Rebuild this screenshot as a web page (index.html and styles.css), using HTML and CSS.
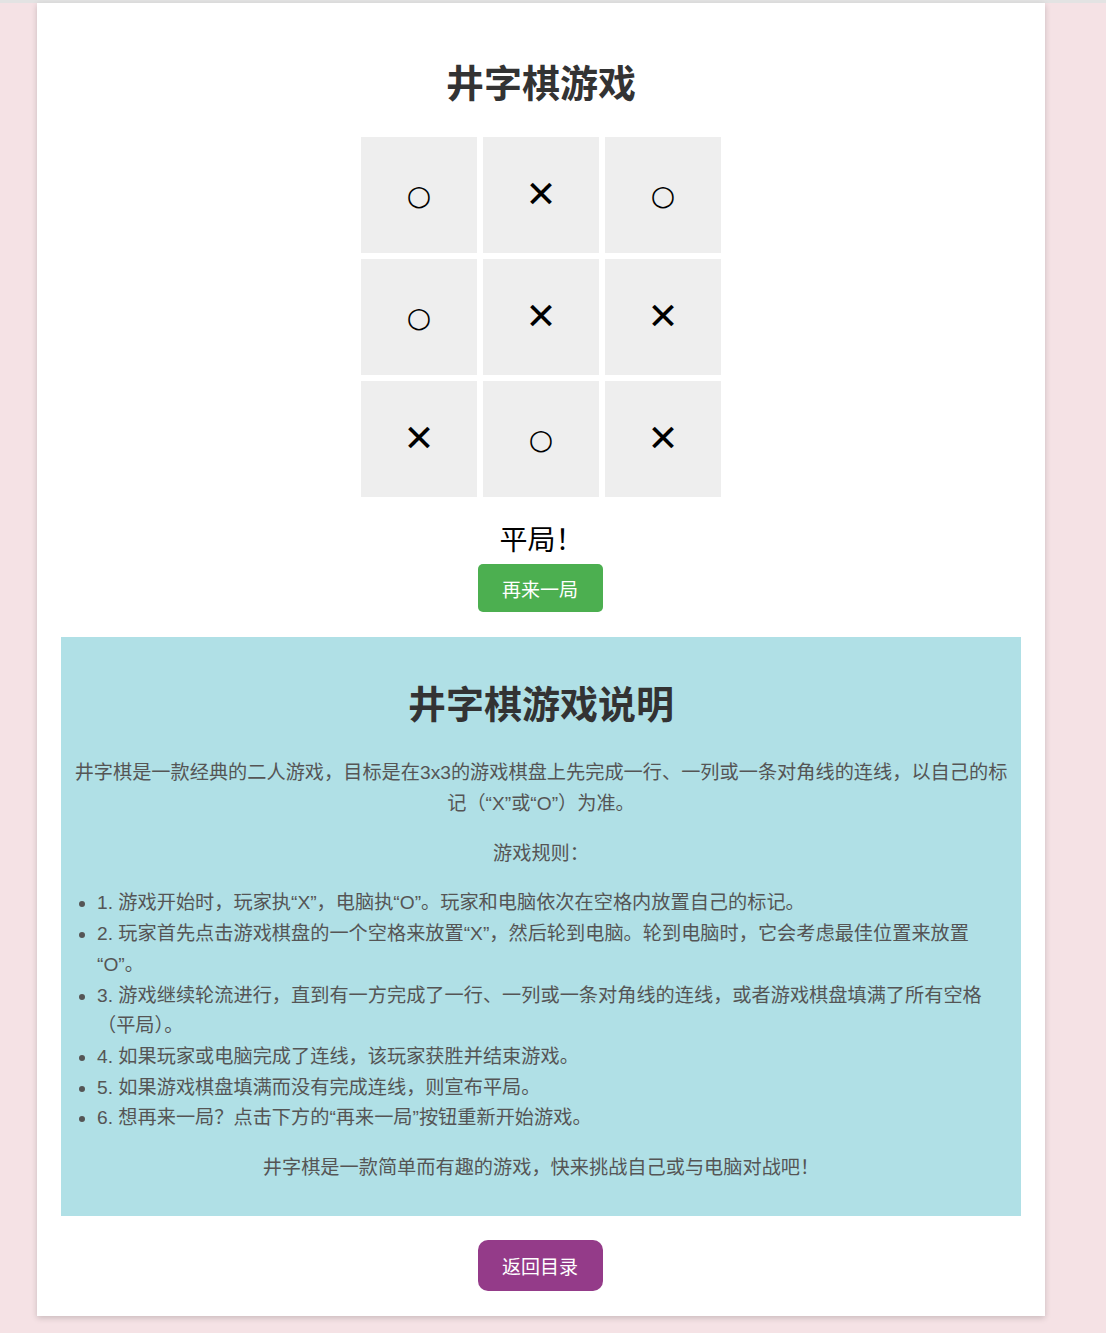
FILE: index.html
```html
<!DOCTYPE html>
<html lang="zh-CN">
<head>
<meta charset="utf-8">
<title>井字棋游戏</title>
<link rel="stylesheet" href="styles.css">
</head>
<body class="page">
<div class="topbar"></div>
<main class="container">
  <h1 class="title">井字棋游戏</h1>
  <div class="board">
    <div class="cell">○</div>
    <div class="cell x">✕</div>
    <div class="cell">○</div>
    <div class="cell">○</div>
    <div class="cell x">✕</div>
    <div class="cell x">✕</div>
    <div class="cell x">✕</div>
    <div class="cell">○</div>
    <div class="cell x">✕</div>
  </div>
  <div class="status">平局！</div>
  <div class="btn-row"><button class="btn btn-green">再来一局</button></div>
  <section class="info">
    <h2 class="info-title">井字棋游戏说明</h2>
    <p class="info-p">井字棋是一款经典的二人游戏，目标是在3x3的游戏棋盘上先完成一行、一列或一条对角线的连线，以自己的标记（“X”或“O”）为准。</p>
    <p class="info-p">游戏规则：</p>
    <ul class="rules">
      <li>1. 游戏开始时，玩家执“X”，电脑执“O”。玩家和电脑依次在空格内放置自己的标记。</li>
      <li>2. 玩家首先点击游戏棋盘的一个空格来放置“X”，然后轮到电脑。轮到电脑时，它会考虑最佳位置来放置“O”。</li>
      <li>3. 游戏继续轮流进行，直到有一方完成了一行、一列或一条对角线的连线，或者游戏棋盘填满了所有空格（平局）。</li>
      <li>4. 如果玩家或电脑完成了连线，该玩家获胜并结束游戏。</li>
      <li>5. 如果游戏棋盘填满而没有完成连线，则宣布平局。</li>
      <li>6. 想再来一局？点击下方的“再来一局”按钮重新开始游戏。</li>
    </ul>
    <p class="info-p">井字棋是一款简单而有趣的游戏，快来挑战自己或与电脑对战吧！</p>
  </section>
  <div class="btn-row back-row"><button class="btn btn-purple">返回目录</button></div>
</main>
</body>
</html>
```

FILE: styles.css
```css
* { box-sizing: border-box; }

.page {
  margin: 0;
  background: #f5e2e5;
  font-family: "Liberation Sans", "Noto Sans CJK SC", sans-serif;
  color: #333;
}

.topbar {
  height: 3px;
  background: #e3e3e3;
}

.container {
  width: 1008px;
  margin: 0 61px 17px 37px;
  background: #fff;
  padding: 24px;
  box-shadow: 0 2px 6px rgba(0, 0, 0, 0.18);
}

.title {
  margin: 31px 0 33px;
  text-align: center;
  font-size: 38px;
  line-height: 46px;
  font-weight: bold;
  color: #333;
  font-family: "Noto Sans CJK SC", sans-serif;
}

.board {
  display: grid;
  grid-template-columns: repeat(3, 116px);
  grid-auto-rows: 116px;
  gap: 6px;
  justify-content: center;
}

.cell {
  background: #eee;
  display: flex;
  align-items: center;
  justify-content: center;
  font-size: 28px;
  line-height: 1;
  color: #000;
  font-family: "DejaVu Sans", sans-serif;
  padding-top: 1px;
}

.cell.x {
  font-size: 37px;
  font-weight: bold;
  padding-top: 0;
  padding-bottom: 1px;
}

.status {
  margin-top: 27px;
  text-align: center;
  font-size: 28px;
  line-height: 34px;
  color: #000;
  padding-left: 1px;
}

.btn-row {
  display: flex;
  justify-content: center;
  margin-top: 6px;
}

.btn {
  border: none;
  color: #fff;
  font-family: "Liberation Sans", "Noto Sans CJK SC", sans-serif;
  font-size: 19px;
  width: 125px;
  cursor: pointer;
}

.btn-green {
  background: #4caf50;
  height: 48px;
  border-radius: 5px;
  margin-left: -2px;
}

.btn-purple {
  background: #943b89;
  height: 51px;
  border-radius: 10px;
  margin-left: -2px;
}

.info {
  margin-top: 25px;
  background: #b0e0e6;
  padding: 13px 12px;
  color: #555;
  font-size: 19.2px;
  line-height: 30.7px;
  text-align: center;
}

.info-title {
  margin: 29px 0 33px;
  font-size: 38px;
  line-height: 46px;
  font-weight: bold;
  color: #333;
  font-family: "Noto Sans CJK SC", sans-serif;
}

.info-p {
  margin: 19.2px 0;
}

.rules {
  margin: 19.2px 0;
  padding-left: 24px;
  text-align: left;
}

.back-row {
  margin-top: 24px;
  margin-bottom: 1px;
}
```
